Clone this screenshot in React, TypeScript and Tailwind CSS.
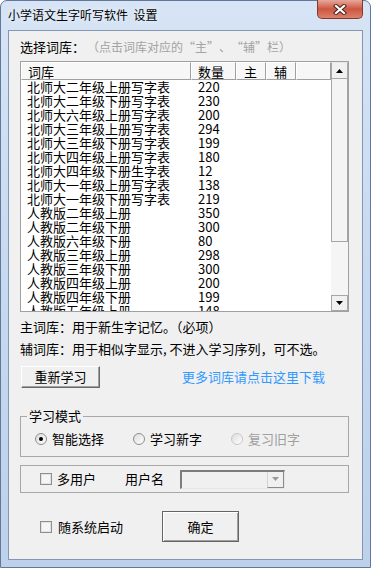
import React from "react";

const rows: [string, string][] = [
  ["北师大二年级上册写字表", "220"],
  ["北师大二年级下册写字表", "230"],
  ["北师大六年级上册写字表", "200"],
  ["北师大三年级上册写字表", "294"],
  ["北师大三年级下册写字表", "199"],
  ["北师大四年级上册写字表", "180"],
  ["北师大四年级下册生字表", "12"],
  ["北师大一年级上册写字表", "138"],
  ["北师大一年级下册写字表", "219"],
  ["人教版二年级上册", "350"],
  ["人教版二年级下册", "300"],
  ["人教版六年级下册", "80"],
  ["人教版三年级上册", "298"],
  ["人教版三年级下册", "300"],
  ["人教版四年级上册", "200"],
  ["人教版四年级下册", "199"],
  ["人教版五年级上册", "148"],
];

function Radio({ checked, disabled, label }: { checked?: boolean; disabled?: boolean; label: string }) {
  return (
    <div className="w-[98px] flex items-center leading-[14px]">
      <span
        className={
          "w-[12px] h-[12px] rounded-full border bg-linear-to-br from-[#dcdcdc] to-white flex items-center justify-center " +
          (disabled ? "border-[#c8c8c8]" : "border-[#8e8e8e]")
        }
      >
        {checked && <span className="w-[4px] h-[4px] rounded-full bg-black" />}
      </span>
      <span className={"ml-[5px] " + (disabled ? "text-[#a0a0a0]" : "")}>{label}</span>
    </div>
  );
}

function Checkbox() {
  return <span className="w-[12px] h-[12px] border border-[#8e8f8f] bg-[#f6f6f6] shadow-[inset_0_0_0_1px_#e2e2e2]" />;
}

function Tri({ up, color = "#000" }: { up?: boolean; color?: string }) {
  return (
    <svg width="7" height="4" viewBox="0 0 7 4">
      {up ? <polygon points="3.5,0 7,4 0,4" fill={color} /> : <polygon points="0,0 7,0 3.5,4" fill={color} />}
    </svg>
  );
}

function HeaderCell({ w, pl, text }: { w: string; pl: string; text?: string }) {
  return (
    <div
      className={
        w +
        " " +
        pl +
        " h-[18px] leading-[17px] bg-[#f7f7f7] border-r border-b border-r-[#a0a0a0] border-b-[#a0a0a0] border-l border-t border-l-white border-t-white"
      }
    >
      {text}
    </div>
  );
}

export default function App() {
  return (
    <div className="w-[371px] h-[568px] font-['Noto_Sans_CJK_SC',sans-serif] text-[13px] text-black">
      <div className="w-[371px] h-[568px] rounded-t-[7px] border border-[#62789a] bg-linear-to-b from-[#d6e4f5] via-[#c7d9f0] to-[#bdd1eb] flex flex-col">
        {/* title bar */}
        <div className="h-[29px] flex justify-between items-start">
          <div className="ml-[7px] mt-[6px] text-[12px] leading-[16px] whitespace-pre [text-shadow:0_0_6px_#ffffff]">
            小学语文生字听写软件  设置
          </div>
          <div className="mr-[7px] mt-[-1px] w-[46px] h-[19px] rounded-b-[5px] border border-t-0 border-[#83392d] bg-linear-to-b from-[#e7a89b] via-[#cc5641] to-[#dc8069] flex items-center justify-center">
            <svg width="14" height="11" viewBox="0 0 14 11">
              <path d="M3 2 L11 9 M11 2 L3 9" stroke="#4a2620" strokeWidth="4.2" strokeLinecap="square" />
              <path d="M3 2 L11 9 M11 2 L3 9" stroke="#ffffff" strokeWidth="2.2" strokeLinecap="square" />
            </svg>
          </div>
        </div>

        {/* client */}
        <div className="ml-[7px] w-[355px] h-[530px] border border-[#8397b3] bg-[#f0f0f0] pl-[11px] pt-[9px] flex flex-col">
          <div className="leading-[14px] flex items-center">
            <span>选择词库：</span>
            <span className="ml-[2px] text-[12px] text-[#a3a3a3] whitespace-nowrap">
              （点击词库对应的
              <span className="inline-block w-[12px] text-right">“</span>主
              <span className="inline-block w-[12px] text-left">”</span>、
              <span className="inline-block w-[12px] text-right">“</span>辅
              <span className="inline-block w-[12px] text-left">”</span>栏）
            </span>
          </div>

          {/* list */}
          <div className="mt-[7px] w-[329px] h-[251px] border border-[#a0a0a0] bg-white flex">
            <div className="w-[310px] flex flex-col overflow-hidden">
              <div className="flex">
                <HeaderCell w="w-[170px]" pl="pl-[6px]" text="词库" />
                <HeaderCell w="w-[45px]" pl="pl-[6px]" text="数量" />
                <HeaderCell w="w-[30px]" pl="pl-[7px]" text="主" />
                <HeaderCell w="w-[30px]" pl="pl-[7px]" text="辅" />
                <HeaderCell w="w-[35px]" pl="pl-[6px]" />
              </div>
              {rows.map(([name, n]) => (
                <div key={name} className="flex h-[14px] leading-[14px] shrink-0">
                  <span className="w-[171px] pl-[6px]">{name}</span>
                  <span className="pl-[6px]">{n}</span>
                </div>
              ))}
            </div>
            <div className="w-[17px] flex flex-col bg-[#f5f5f5]">
              <div className="h-[17px] bg-[#f0f0f0] border border-[#a6a6a6] border-t-[#e8e8e8] flex items-center justify-center">
                <Tri up />
              </div>
              <div className="h-[163px] bg-[#f4f4f4] border-l border-r border-b border-[#a6a6a6]" />
              <div className="h-[53px]" />
              <div className="h-[16px] bg-[#f0f0f0] border border-[#a6a6a6] flex items-center justify-center">
                <Tri />
              </div>
            </div>
          </div>

          <div className="mt-[8px] leading-[14px]">主词库：用于新生字记忆。（必项）</div>
          <div className="mt-[8px] leading-[14px]">辅词库：用于相似字显示, 不进入学习序列，可不选。</div>

          <div className="mt-[10px] flex items-center">
            <div className="ml-[1px] w-[79px] h-[22px] bg-[#f0f0f0] border border-t-white border-l-white border-r-[#696969] border-b-[#696969] shadow-[inset_-1px_-1px_0_#a0a0a0] flex items-center justify-center leading-[14px]">
              重新学习
            </div>
            <span className="ml-[82px] leading-[14px] text-[#3399ff]">更多词库请点击这里下载</span>
          </div>

          {/* group 1 */}
          <div className="mt-[28px] relative w-[329px] h-[41px] border border-[#a8a8a8] pt-[15px] pl-[14px] flex items-start">
            <span className="absolute left-[6px] top-[-8px] px-[2px] bg-[#f0f0f0] leading-[14px]">学习模式</span>
            <Radio checked label="智能选择" />
            <Radio label="学习新字" />
            <Radio disabled label="复习旧字" />
          </div>

          {/* group 2 */}
          <div className="mt-[8px] w-[329px] h-[28px] border border-[#a8a8a8] pl-[19px] flex items-center">
            <Checkbox />
            <span className="ml-[5px] leading-[14px]">多用户</span>
            <span className="ml-[29px] leading-[14px]">用户名</span>
            <div className="ml-[16px] w-[105px] h-[19px] bg-[#f0f0f0] border-t-2 border-l-2 border-b border-r border-t-[#7c7c7c] border-l-[#7c7c7c] border-b-[#e6e6e6] border-r-[#e6e6e6] flex justify-end">
              <div className="w-[17px] h-full border-l border-[#d4d4d4] border-r border-r-[#8a8a8a] border-b border-b-[#8a8a8a] flex items-center justify-center">
                <Tri color="#9a9a9a" />
              </div>
            </div>
          </div>

          {/* bottom row */}
          <div className="mt-[18px] h-[31px] pl-[20px] flex items-center">
            <Checkbox />
            <span className="ml-[6px] leading-[14px]">随系统启动</span>
            <div className="ml-[39px] w-[77px] h-[31px] bg-[#f0f0f0] border border-[#646464] shadow-[inset_1px_1px_0_#ffffff,inset_-1px_-1px_0_#a0a0a0] flex items-center justify-center leading-[14px]">
              确定
            </div>
          </div>
        </div>
      </div>
    </div>
  );
}
